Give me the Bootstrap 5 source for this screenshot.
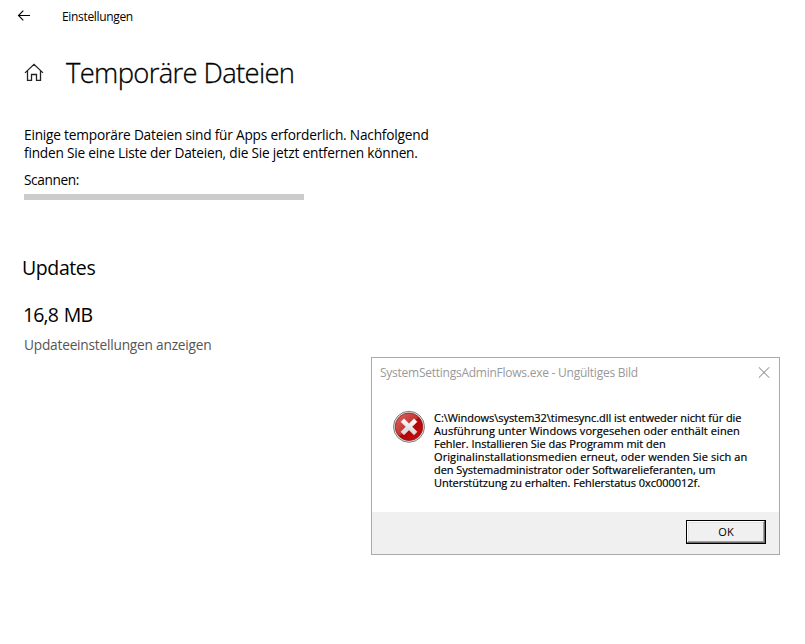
<!DOCTYPE html>
<html lang="de">
<head>
  <meta charset="UTF-8">
  <meta name="viewport" content="width=device-width, initial-scale=1">
  <title>Temporäre Dateien</title>

  <!-- Bootstrap CSS -->
  <link href="https://cdn.jsdelivr.net/npm/bootstrap@5.3.3/dist/css/bootstrap.min.css" rel="stylesheet">

  <style>
    body {
      background-color: #fff;
      color: #000;
      font-family: 'Open Sans', 'Noto Sans', sans-serif;
      font-size: 13.7px;
      letter-spacing: -0.21px;
      line-height: 18px;
      height: 644px;
      overflow: hidden;
    }

    .line {
      display: block;
      white-space: nowrap;
    }

    .topbar {
      height: 32px;
      padding-left: 17px;
      font-size: 12px;
      letter-spacing: -0.33px;
    }

    .topbar-title {
      margin-left: 31px;
      padding-top: 1px;
    }

    .page-head {
      height: 40px;
      margin-top: 20px;
      padding-left: 24px;
    }

    .page-title {
      margin-left: 22px;
      padding-top: 1px;
      font-size: 27.4px;
      font-weight: 300;
      letter-spacing: -0.65px;
      line-height: 38px;
      -webkit-text-stroke: 0.3px #000;
    }

    .page-main {
      padding: 34px 0 0 24px;
    }

    .scan-label {
      margin-top: 9px;
      letter-spacing: -0.4px;
    }

    .scan-bar {
      width: 280px;
      height: 6px;
      margin-top: 5px;
      border-radius: 0;
      background-color: #ccc;
    }

    .section-title,
    .size-value {
      font-size: 19.5px;
      font-weight: 400;
      line-height: 28px;
    }

    .section-title {
      margin: 54px 0 0 -2px;
      letter-spacing: -0.4px;
    }

    .size-value {
      margin: 19px 0 0 -1px;
      letter-spacing: -0.85px;
      word-spacing: 1.5px;
    }

    .update-link {
      margin-top: 7px;
      color: #555;
    }

    .error-dialog {
      left: 371px;
      top: 357px;
      width: 409px;
      height: 198px;
      border: 1px solid #aaa;
      background-color: #fff;
    }

    .dialog-title {
      height: 30px;
      padding: 0 9px 0 8px;
      font-size: 12px;
      letter-spacing: -0.25px;
      color: #999;
    }

    .dialog-text {
      padding: 23px 0 0 20px;
      font-size: 11px;
      letter-spacing: -0.04px;
      line-height: 13px;
      -webkit-text-stroke: 0.2px #000;
    }

    .dialog-text svg {
      margin-top: -1px;
    }

    .dialog-message {
      margin-left: 9px;
    }

    .line-wide {
      letter-spacing: 0.09px;
    }

    .dialog-foot {
      height: 42px;
      padding: 8px 13px 0 0;
      background-color: #f0f0f0;
    }

    .btn-classic {
      width: 80px;
      height: 24px;
      padding: 0;
      border: 1px solid #000;
      border-radius: 0;
      background-color: #f0f0f0;
      box-shadow: inset -1px -1px #696969, inset 1px 1px #fff, inset -2px -2px #a0a0a0, inset 2px 2px #e3e3e3;
      color: #000;
      font-size: 11px;
      line-height: 22px;
    }
  </style>
</head>
<body>

<header class="topbar d-flex align-items-center">
  <svg width="14" height="12" viewBox="0 0 14 12" fill="none" stroke="#000" stroke-width="1.1"><path d="M13 5.5H1.5M6.3.7 1.5 5.5l4.8 4.8"/></svg>
  <span class="topbar-title">Einstellungen</span>
</header>

<div class="page-head d-flex align-items-center">
  <svg width="20" height="18" viewBox="0 0 20 18" fill="none" stroke="#222" stroke-width="1.3"><path d="M1 9.9 10 1.4l9 8.5M3.5 7.8v9.7h4v-6h5v6h4V7.8"/></svg>
  <h1 class="page-title mb-0">Temporäre Dateien</h1>
</div>

<main class="page-main">
  <p class="mb-0">
    <span class="line">Einige temporäre Dateien sind für Apps erforderlich. Nachfolgend</span>
    <span class="line">finden Sie eine Liste der Dateien, die Sie jetzt entfernen können.</span>
  </p>
  <div class="scan-label">Scannen:</div>
  <div class="progress scan-bar"></div>

  <h2 class="section-title">Updates</h2>
  <div class="size-value">16,8 MB</div>
  <div class="update-link">Updateeinstellungen anzeigen</div>
</main>

<!-- Fehlerdialog -->
<div class="error-dialog position-absolute d-flex flex-column">
  <div class="dialog-title d-flex align-items-center justify-content-between">
    <span>SystemSettingsAdminFlows.exe - Ungültiges Bild</span>
    <svg width="12" height="12" viewBox="0 0 12 12" stroke="#777" stroke-width="1"><path d="M.8.3l10.4 10.4M11.2.3.8 10.7"/></svg>
  </div>
  <div class="dialog-text d-flex flex-grow-1">
    <svg width="33" height="33" viewBox="0 0 33 33">
      <defs>
        <linearGradient id="red" x1="0" y1="0" x2="1" y2="1">
          <stop offset="0" stop-color="#dc6a66"/>
          <stop offset=".48" stop-color="#c43430"/>
          <stop offset=".52" stop-color="#b00508"/>
          <stop offset="1" stop-color="#c8100c"/>
        </linearGradient>
        <linearGradient id="cross" x1="0" y1="0" x2="0" y2="1">
          <stop offset="0" stop-color="#fff"/>
          <stop offset="1" stop-color="#d4d4d4"/>
        </linearGradient>
      </defs>
      <circle cx="17" cy="16.8" r="15.5" fill="#e4e4e4" stroke="#7d8080" stroke-width="1"/>
      <circle cx="17" cy="16.8" r="13.8" fill="url(#red)" stroke="#8e1512" stroke-width=".7"/>
      <path d="M9 11.8l3-3 5 5 5-5 3 3-5 5 5 5-3 3-5-5-5 5-3-3 5-5z" fill="url(#cross)" stroke="#eee" stroke-width=".6" stroke-linejoin="round"/>
    </svg>
    <div class="dialog-message">
      <span class="line">C:\Windows\system32\timesync.dll ist entweder nicht für die</span>
      <span class="line line-wide">Ausführung unter Windows vorgesehen oder enthält einen</span>
      <span class="line">Fehler. Installieren Sie das Programm mit den</span>
      <span class="line line-wide">Originalinstallationsmedien erneut, oder wenden Sie sich an</span>
      <span class="line">den Systemadministrator oder Softwarelieferanten, um</span>
      <span class="line">Unterstützung zu erhalten. Fehlerstatus 0xc000012f.</span>
    </div>
  </div>
  <div class="dialog-foot d-flex justify-content-end align-items-start">
    <button type="button" class="btn btn-classic">OK</button>
  </div>
</div>

<script src="https://cdn.jsdelivr.net/npm/bootstrap@5.3.3/dist/js/bootstrap.bundle.min.js"></script>
</body>
</html>
